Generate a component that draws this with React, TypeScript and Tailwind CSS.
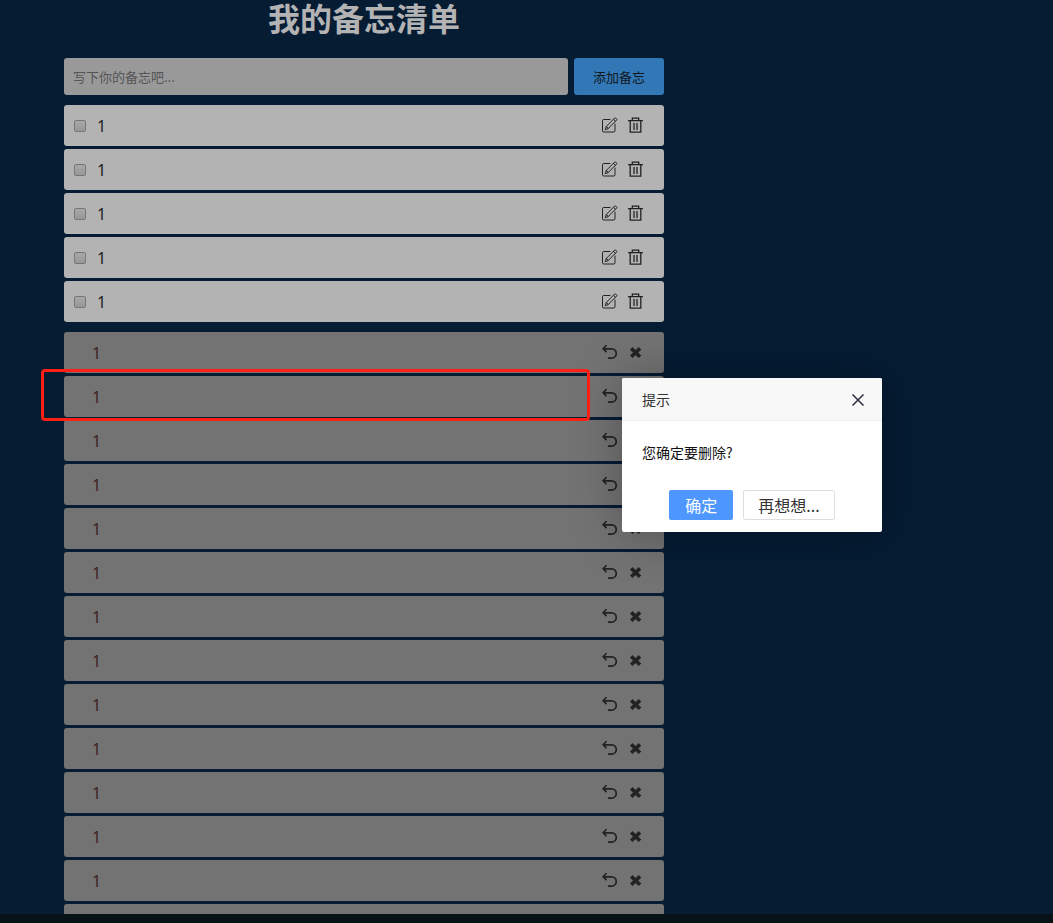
import { useState } from "react";

function EditIcon() {
  return (
    <svg width="18" height="17" viewBox="0 0 18 17" fill="none" stroke="currentColor" strokeWidth="1" strokeLinejoin="round" strokeLinecap="round" aria-hidden="true">
      <path d="M9 2.5H2.7a1.2 1.2 0 0 0-1.2 1.2v10.1A1.2 1.2 0 0 0 2.7 15h10.1a1.2 1.2 0 0 0 1.2-1.2V7" />
      <path d="M4.4 12.3l.9-2.9 8.3-8.3a.8.8 0 0 1 1.1 0l.9.9a.8.8 0 0 1 0 1.1l-8.3 8.3zM12.4 2.3l2 2M5.3 9.4l2 2" />
    </svg>
  );
}

function TrashIcon() {
  return (
    <svg width="18" height="17" viewBox="0 0 18 17" fill="none" stroke="currentColor" strokeWidth="1.3" aria-hidden="true">
      <path d="M1 3.6h15M5.3 3.4V1.2h6.4v2.2M3.2 4v11.2h10.6V4" />
      <path d="M7 6v7M10 6v7" />
    </svg>
  );
}

function UndoIcon() {
  return (
    <svg width="18" height="17" viewBox="0 0 18 17" fill="none" stroke="currentColor" strokeWidth="1.7" aria-hidden="true">
      <path d="M2.2 4.8h8.4a4.6 4.6 0 0 1 0 9.3H7M5.5 1.2L2.2 4.8l3.3 3.4" />
    </svg>
  );
}

function CrossIcon() {
  return (
    <svg width="18" height="17" viewBox="0 0 18 17" fill="none" stroke="currentColor" strokeWidth="3.6" aria-hidden="true">
      <path d="M4.2 4.4l8.8 8.4M13 4.4l-8.8 8.4" />
    </svg>
  );
}

const openItems = Array.from({ length: 5 }, (_, id) => ({ id, text: "1" }));
const doneItems = Array.from({ length: 14 }, (_, id) => ({ id, text: id < 13 ? "1" : "" }));

export default function App() {
  const [open, setOpen] = useState(true);
  return (
    <div className="relative flex h-screen flex-col overflow-hidden bg-[#051c33] font-['Noto_Sans','Noto_Sans_CJK_SC',sans-serif] text-base text-[#222]">
      <main className="min-h-0 w-full max-w-[664px] flex-1 overflow-hidden pl-16">
        <h1 className="mb-6 text-center font-['Noto_Sans_CJK_SC',sans-serif] text-[32px] leading-[34px] font-bold text-[#b3b3b3]">我的备忘清单</h1>
        <form className="mb-2.5 flex gap-1.5 font-['Noto_Sans_CJK_SC',sans-serif] text-[13px]" onSubmit={(e) => e.preventDefault()}>
          <input
            type="text"
            aria-label="备忘内容"
            placeholder="写下你的备忘吧..."
            className="h-[37px] min-w-0 flex-1 rounded-[3px] bg-[#999] px-[9px] outline-none placeholder:text-[#555]"
          />
          <button type="submit" className="h-[37px] w-[90px] rounded-[3px] bg-[#3277b6] text-[#101820]">添加备忘</button>
        </form>
        <ul className="mb-2.5 flex flex-col gap-[3px]">
          {openItems.map((item) => (
            <li key={item.id} className="flex h-[41px] items-center justify-between rounded-[3px] bg-[#b3b3b3] pr-[19px] pl-2.5">
              <label className="flex items-center gap-[11px]">
                <input type="checkbox" className="h-3 w-3 appearance-none rounded-[2px] border border-[#777] bg-linear-to-b from-[#a8a8a8] to-[#979797]" />
                <span>{item.text}</span>
              </label>
              <span className="flex gap-2">
                <button type="button" aria-label="编辑"><EditIcon /></button>
                <button type="button" aria-label="删除"><TrashIcon /></button>
              </span>
            </li>
          ))}
        </ul>
        <ul className="flex flex-col gap-[3px]">
          {doneItems.map((item) => (
            <li key={item.id} className="flex h-[41px] shrink-0 items-center justify-between rounded-[3px] bg-[#737373] pr-[19px] pl-7">
              <span className="text-[#3b2424]">{item.text}</span>
              <span className="flex gap-2">
                <button type="button" aria-label="恢复"><UndoIcon /></button>
                <button type="button" aria-label="彻底删除"><CrossIcon /></button>
              </span>
            </li>
          ))}
        </ul>
      </main>
      <footer className="h-[9px] shrink-0 bg-[#071217]" />

      <div className="pointer-events-none absolute top-[369px] left-[41px] h-[52px] w-[549px] rounded-[4px] border-3 border-[#ff2015]" />

      {open && (
        <section
          role="dialog"
          aria-labelledby="dialog-title"
          className="absolute top-[378px] left-[622px] w-[260px] rounded-[2px] bg-white font-['Noto_Sans_CJK_SC',sans-serif] text-sm shadow-[1px_1px_50px_rgba(0,0,0,0.3)]"
        >
          <header className="flex h-[43px] items-center justify-between rounded-t-[2px] border-b border-[#eee] bg-[#f8f8f8] pr-4 pl-5">
            <h2 id="dialog-title" className="text-[#333]">提示</h2>
            <button type="button" aria-label="关闭" onClick={() => setOpen(false)} className="text-[#2e2d3c]">
              <svg width="16" height="16" viewBox="0 0 16 16" fill="none" stroke="currentColor" strokeWidth="1.5" aria-hidden="true">
                <path d="M2.5 3.5l11 11M13.5 3.5l-11 11" />
              </svg>
            </button>
          </header>
          <p className="px-5 pt-5 pb-[27px] leading-[22px] text-[#111]">您确定要删除?</p>
          <div className="flex justify-center gap-2.5 pb-3 text-base">
            <button type="button" onClick={() => setOpen(false)} className="h-[30px] rounded-[2px] bg-[#4e97ff] px-4 text-white">确定</button>
            <button type="button" onClick={() => setOpen(false)} className="h-[30px] rounded-[2px] border border-[#dedede] bg-white px-3.5 text-[#333]">再想想...</button>
          </div>
        </section>
      )}
    </div>
  );
}
